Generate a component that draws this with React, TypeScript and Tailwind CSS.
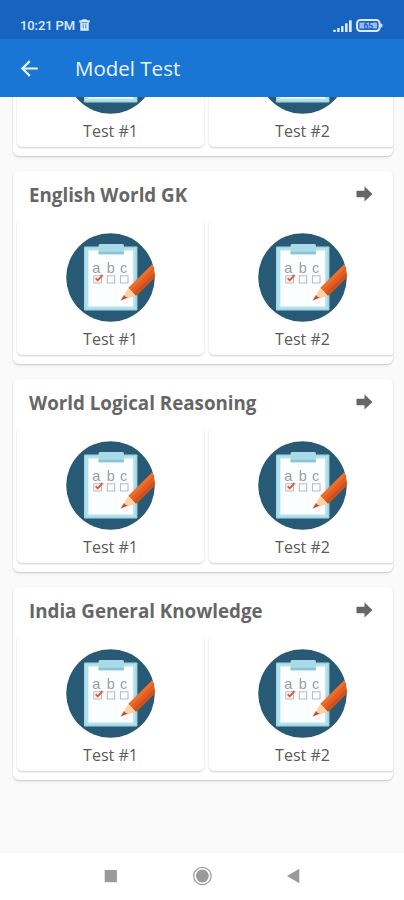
import { useId } from "react";

const sections = [
  { title: "General Knowledge", tests: ["Test #1", "Test #2"] },
  { title: "English World GK", tests: ["Test #1", "Test #2"] },
  { title: "World Logical Reasoning", tests: ["Test #1", "Test #2"] },
  { title: "India General Knowledge", tests: ["Test #1", "Test #2"] },
];

function StatusBar() {
  return (
    <div className="flex h-[39px] items-end justify-between bg-[#1764c0] pr-[21px] pl-[20px] text-[#dcebfc]">
      <div className="flex h-[27px] items-center gap-[4px]">
        <span className="font-['Roboto',sans-serif] text-[13px] leading-none font-medium tracking-[-0.1px]">10:21 PM</span>
        <svg width="11" height="12" viewBox="0 0 11 12" className="-mt-px">
          <path d="M0.3 1.3h3V0.3h4.4v1h3v2.3h-1v8.2H1.3V3.6h-1z" fill="currentColor" />
          <path d="M2.5 3.7h6M4.2 5.2v4.2M6.8 5.2v4.2" stroke="#1764c0" strokeWidth="0.8" />
        </svg>
      </div>
      <div className="flex h-[27px] items-center gap-[4px]">
        <svg width="19" height="12" viewBox="0 0 19 12" fill="currentColor">
          <rect x="0.3" y="9.8" width="2.4" height="2.2" rx="0.5" />
          <rect x="4.2" y="8" width="2.4" height="4" rx="0.5" />
          <rect x="8.1" y="6" width="2.4" height="6" rx="0.5" />
          <rect x="12" y="3.2" width="2.6" height="8.8" rx="0.5" />
          <rect x="16" y="0.3" width="2.7" height="11.7" rx="0.5" />
        </svg>
        <svg width="27" height="13" viewBox="0 0 27 13">
          <rect x="1" y="1" width="22.6" height="11" rx="3.4" fill="none" stroke="currentColor" strokeWidth="2" />
          <rect x="3.4" y="3.4" width="17.6" height="6.2" rx="1.2" fill="currentColor" opacity="0.65" />
          <path d="M24.3 4l2.2 1.5v2L24.3 9z" fill="currentColor" />
          <text x="7.4" y="9.6" fontSize="8.5" fontWeight="700" fontFamily="Roboto, sans-serif" fill="#1764c0">65</text>
        </svg>
      </div>
    </div>
  );
}

function Header() {
  return (
    <header className="flex h-[58px] items-center bg-[#1976d4] pl-[21px] text-[#eaf5ff]">
      <svg width="17" height="17" viewBox="0 0 17 17" fill="none" stroke="currentColor" strokeWidth="2.2">
        <path d="M16.8 8.5H1.6M8.8 1.1L1.4 8.5l7.4 7.4" />
      </svg>
      <h1 className="ml-[37px] font-['Open_Sans',sans-serif] text-[20.5px] leading-none">Model Test</h1>
    </header>
  );
}

function TestIcon() {
  const clip = useId();
  return (
    <svg width="89" height="89" viewBox="0 0 89 89">
      <clipPath id={clip}>
        <circle cx="44.5" cy="44.5" r="44.3" />
      </clipPath>
      <circle cx="44.5" cy="44.5" r="44.3" fill="#285a76" />
      <rect x="18" y="13.4" width="53.4" height="64.2" rx="1" fill="#a0d6e4" />
      <rect x="19.6" y="15" width="50" height="61" fill="#b4e0ea" />
      <rect x="22.4" y="17.4" width="44.8" height="56.2" fill="#fcfdff" />
      <path d="M34 11h22.5q1.4 0 1.4 1.4v8.8H32.6v-8.8q0-1.4 1.4-1.4z" fill="#a8dbe6" />
      <path d="M32.6 18.8h25.3v2.4H32.6z" fill="#86c3d4" />
      {/* answer row */}
      <g fill="#9a9da3" fontFamily="'Liberation Sans', sans-serif" fontSize="14.5" textAnchor="middle">
        <text x="30.4" y="39.8">a</text>
        <text x="44.7" y="39.8">b</text>
        <text x="57.6" y="39.8">c</text>
      </g>
      <g fill="none" stroke="#b0b3b7" strokeWidth="0.9">
        <rect x="27.8" y="42.8" width="7.6" height="7.2" />
        <rect x="41.2" y="42.8" width="7.6" height="7.2" />
        <rect x="54.4" y="42.8" width="7.6" height="7.2" />
      </g>
      <path d="M29.6 45.2l2.2 2.2 4.8-5.4" fill="none" stroke="#e0602f" strokeWidth="1.9" />
      {/* pencil */}
      <g clipPath={`url(#${clip})`}>
        <path d="M54.7 67.6L62.6 54.8l7.4 8z" fill="#f8d3a4" />
        <path d="M54.7 67.6l3.4-5.6q1.2 2.6 3.8 2.5z" fill="#cc4528" />
        <path d="M62.6 54.8L89 28.4l8 8-27 26.4z" fill="#e35d22" />
        <path d="M62.6 54.8L89 28.4l2.6 2.6-26.6 26.4z" fill="#e9702f" />
        <path d="M67.6 60.2L94 34l3 2.4-27 26.4z" fill="#d2501c" />
      </g>
    </svg>
  );
}

function TestCard({ name }: { name: string }) {
  return (
    <div className="flex h-[136px] w-[187px] shrink-0 flex-col items-center rounded-[5px] bg-white pt-[14px] shadow-[0_1px_2px_rgba(0,0,0,0.2)]">
      <TestIcon />
      <span className="mt-[6px] font-['Open_Sans',sans-serif] text-[16px] leading-[22px] text-[#5a5a5a]">{name}</span>
    </div>
  );
}

function Section({ title, tests }: { title: string; tests: string[] }) {
  return (
    <section className="h-[193px] shrink-0 overflow-hidden rounded-[6px] bg-white shadow-[0_1px_2px_rgba(0,0,0,0.22)]">
      <div className="flex h-[48px] items-center justify-between pr-[20px] pl-[16px]">
        <h2 className="font-['Open_Sans',sans-serif] text-[18.75px] leading-none font-bold text-[#666]">{title}</h2>
        <svg width="17" height="16" viewBox="0 0 17 16" className="-mt-[2px]" fill="#666">
          <path d="M0.5 4.8h8V0.6L16.5 8l-8 7.4v-4.2h-8z" />
        </svg>
      </div>
      <div className="flex gap-[5px] pl-[4px]">
        {tests.map((test) => (
          <TestCard key={test} name={test} />
        ))}
      </div>
    </section>
  );
}

function NavBar() {
  return (
    <nav className="flex h-[47px] items-center justify-center bg-white pb-px text-[#9a9a9a]">
      <svg width="196" height="20" viewBox="0 0 196 20" fill="currentColor">
        <rect x="0.7" y="4" width="12.2" height="12.2" />
        <circle cx="98.4" cy="10" r="8.7" fill="none" stroke="currentColor" strokeWidth="1.2" />
        <circle cx="98.4" cy="10" r="6.4" />
        <path d="M195.3 2.8v14.4L183 10z" />
      </svg>
    </nav>
  );
}

export default function App() {
  return (
    <div className="flex h-[900px] w-[404px] flex-col overflow-hidden bg-[#fafafa]">
      <StatusBar />
      <Header />
      <main className="h-[756px] overflow-hidden pr-[11px] pl-[13px]">
        <div className="-mt-[134px] flex flex-col gap-[15px]">
          {sections.map((section) => (
            <Section key={section.title} title={section.title} tests={section.tests} />
          ))}
        </div>
      </main>
      <NavBar />
    </div>
  );
}
